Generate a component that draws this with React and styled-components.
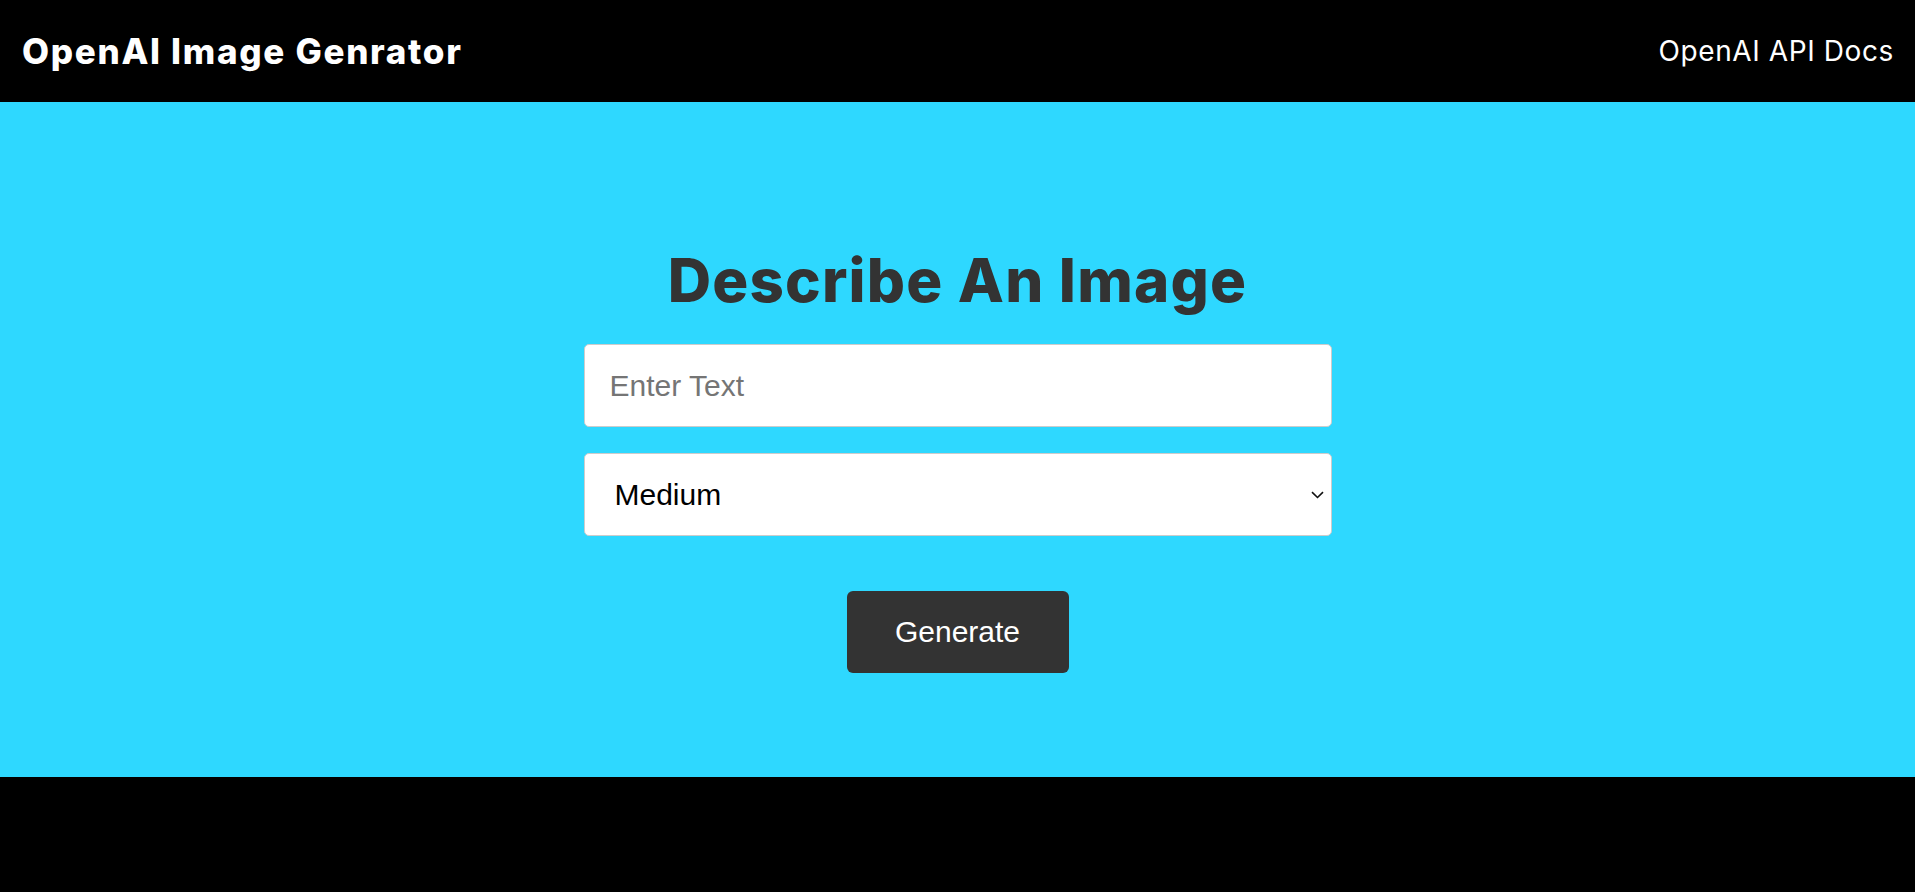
import React from 'react';
import styled, { createGlobalStyle } from 'styled-components';

const GlobalStyle = createGlobalStyle`
  * {
    box-sizing: border-box;
  }
  body {
    margin: 0;
    background: #000;
    font-family: 'Liberation Sans', Arial, sans-serif;
  }
`;

const Navbar = styled.nav`
  display: flex;
  align-items: center;
  justify-content: space-between;
  height: 102px;
  padding: 0 21px 0 22px;
  background: #000;
  color: #fff;
`;

const Logo = styled.h1`
  margin: 0;
  font-family: Inter, 'Noto Sans', sans-serif;
  font-size: 35px;
  font-weight: 800;
  letter-spacing: 1.7px;
`;

const NavLink = styled.a`
  font-family: Inter, 'Noto Sans', sans-serif;
  font-size: 28px;
  font-weight: 400;
  letter-spacing: 0.6px;
  color: #fff;
  text-decoration: none;
`;

const Showcase = styled.main`
  display: flex;
  justify-content: center;
  height: 675px;
  padding-top: 148px;
  background: #2ed8ff;
`;

const Form = styled.form`
  display: flex;
  flex-direction: column;
  align-items: center;
  width: 748px;
`;

const Heading = styled.h2`
  margin: 0 0 34px;
  font-family: Inter, 'Noto Sans', sans-serif;
  font-size: 60px;
  font-weight: 800;
  line-height: 1;
  letter-spacing: 1.2px;
  color: #333;
`;

const Field = styled.input`
  width: 100%;
  height: 83px;
  padding: 0 25px;
  border: 1px solid #ccc;
  border-radius: 5px;
  font-family: 'Liberation Sans', Arial, sans-serif;
  font-size: 30px;
  color: #000;
  outline: none;

  &::placeholder {
    color: #757575;
  }
`;

const SelectWrap = styled.div`
  position: relative;
  width: 100%;
  margin-top: 26px;
`;

const SizeSelect = styled.select`
  display: block;
  width: 100%;
  height: 83px;
  padding: 0 40px 0 30px;
  border: 1px solid #ccc;
  border-radius: 5px;
  background: #fff;
  font-family: 'Liberation Sans', Arial, sans-serif;
  font-size: 30px;
  color: #000;
  appearance: none;
  outline: none;
`;

const Chevron = styled.svg`
  position: absolute;
  top: 50%;
  right: 8px;
  width: 13px;
  height: 8px;
  transform: translateY(-50%);
  pointer-events: none;
`;

const GenerateButton = styled.button`
  width: 222px;
  height: 82px;
  margin-top: 55px;
  border: none;
  border-radius: 6px;
  background: #333;
  color: #fff;
  font-family: 'Liberation Sans', Arial, sans-serif;
  font-size: 30px;
  cursor: pointer;
`;

const Footer = styled.footer`
  height: 115px;
  background: #000;
`;

const App = () => (
  <>
    <GlobalStyle />
    <Navbar>
      <Logo>OpenAI Image Genrator</Logo>
      <NavLink href="#">OpenAI API Docs</NavLink>
    </Navbar>
    <Showcase>
      <Form onSubmit={(e) => e.preventDefault()}>
        <Heading>Describe An Image</Heading>
        <Field type="text" placeholder="Enter Text" />
        <SelectWrap>
          <SizeSelect defaultValue="medium">
            <option value="small">Small</option>
            <option value="medium">Medium</option>
            <option value="large">Large</option>
          </SizeSelect>
          <Chevron viewBox="0 0 13 8" fill="none">
            <path d="M1 1.2l5.5 5.3 5.5-5.3" stroke="#111" strokeWidth="1.6" />
          </Chevron>
        </SelectWrap>
        <GenerateButton type="submit">Generate</GenerateButton>
      </Form>
    </Showcase>
    <Footer />
  </>
);

export default App;
